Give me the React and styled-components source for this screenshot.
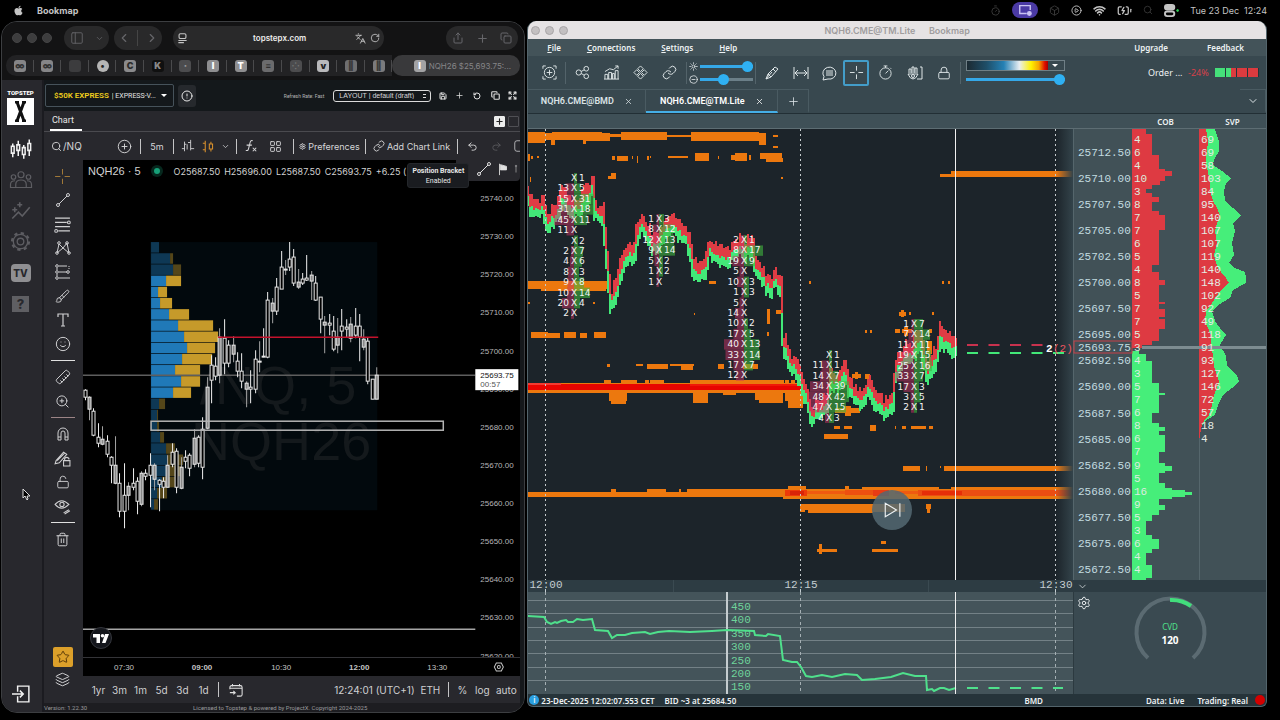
import { useState } from "react"
import styled, { createGlobalStyle, css } from "styled-components"
import { FaApple } from "react-icons/fa"
import {
  PanelLeft, ChevronDown, ChevronLeft, ChevronRight, Languages, RotateCw, RotateCcw, Share, Plus, Copy, Save,
  CircleAlert, Search, CirclePlus, LayoutGrid, Settings, Link, Undo2, Redo2, Ruler, ZoomIn,
  LockOpen, Lock, Trash2, Star, Layers, Smile, Brush, X, Wifi, BatteryCharging, CirclePlay,
  Timer, Expand, Box, Sun, CircleMinus
} from "lucide-react"

const GlobalStyle = createGlobalStyle`
  * {
    box-sizing: border-box;
  }
  body {
    margin: 0;
    background: #000;
    font-family: Inter, "Liberation Sans", sans-serif;
    overflow: hidden;
  }
  button, input, select {
    font-family: inherit;
    color: inherit;
    margin: 0;
    padding: 0;
    border: none;
    background: none;
    outline: none;
  }
  button {
    cursor: pointer;
  }
`
const Desktop = styled.div`
  height: 100vh;
  display: flex;
  flex-direction: column;
  background: #000;
`
const MenuBar = styled.header`
  height: 20px;
  flex: none;
  display: flex;
  align-items: center;
  padding: 0 13px;
  color: #c4c4c4;
  font-size: 10px;
  gap: 13px;
`
const AppName = styled.strong`
  font-size: 9px;
  font-weight: 700;
`
const Tray = styled.div`
  margin-left: auto;
  display: flex;
  align-items: center;
  gap: 11px;
`
const TrayDim = styled.span`
  display: flex;
  color: #3a3a3a;
`
const ScreenPill = styled.span`
  width: 26px;
  height: 16px;
  border-radius: 8px;
  background: #4b3aa5;
  color: #c9c2f2;
  display: flex;
  align-items: center;
  justify-content: center;
`
const Clock = styled.time`
  white-space: pre;
  font-size: 9px;
`
const Windows = styled.main`
  flex: 1;
  min-height: 0;
  display: flex;
  gap: 2px;
  padding: 1px 13px 7px 1px;
`
const Spacer = styled.div`
  flex: 1;
`

/* browser window */
const Browser = styled.section`
  flex: 524 1 0;
  min-width: 0;
  display: flex;
  flex-direction: column;
  border: 1px solid #3c3e41;
  border-radius: 16px;
  background: #17171a;
  overflow: hidden;
  color: #d6d6d8;
`
const SafariBar = styled.div`
  height: 32px;
  flex: none;
  display: flex;
  align-items: center;
  background: #131314;
  padding: 0 6px 0 10px;
`
const Lights = styled.div`
  display: flex;
  gap: ${props => props.$gap}px;
`
const Light = styled.span`
  width: ${props => props.$size}px;
  height: ${props => props.$size}px;
  border-radius: 50%;
  background: ${props => props.$color};
  border: 1px solid ${props => props.$edge};
`
const Pill = styled.div`
  width: ${props => props.$w}px;
  height: 24px;
  border-radius: 12px;
  background: #29292a;
  color: #66666a;
  display: flex;
  align-items: center;
  justify-content: space-around;
  margin-left: ${props => props.$ml}px;
`
const PlainButton = styled.button`
  display: flex;
  align-items: center;
  justify-content: center;
`
const PillRule = styled.span`
  width: 1px;
  height: 16px;
  background: #454545;
`
const UrlBox = styled.label`
  flex: 1;
  margin: 0 62px 0 11px;
  height: 24px;
  border-radius: 12px;
  background: #29292a;
  display: flex;
  align-items: center;
  gap: 4px;
  padding: 0 4px;
  color: #c5c5c5;
`
const UrlInput = styled.input`
  flex: 1;
  min-width: 0;
  padding-left: 16px;
  text-align: center;
  font-size: 8px;
  font-weight: 600;
  color: #ededed;
`
const Bookmarks = styled.div`
  height: 26px;
  flex: none;
  background: #131314;
  display: flex;
  padding: 1px 4px 4px 4px;
`
const BookmarkRow = styled.div`
  flex: 1;
  display: flex;
  border-radius: 10px 0 0 10px;
  background: #222224;
`
const Bookmark = styled.button`
  flex: 1;
  display: flex;
  align-items: center;
  justify-content: center;
  background-image: linear-gradient(#4a4a4c, #4a4a4c);
  background-size: 1px 12px;
  background-position: right center;
  background-repeat: no-repeat;
`
const Favicon = styled.span`
  width: 12px;
  height: 12px;
  border-radius: ${props => props.$round ? "50%" : "3px"};
  background: ${props => props.$bg};
  color: ${props => props.$fg};
  font-size: 9px;
  font-weight: 900;
  line-height: 12px;
  text-align: center;
`
const ActiveTab = styled.button`
  width: 128px;
  padding-left: 12px;
  border-radius: 10px;
  background: #39393b;
  color: #858588;
  font-size: 8px;
  display: flex;
  align-items: center;
  justify-content: center;
  gap: 3px;
  white-space: nowrap;
`
const Trading = styled.div`
  flex: 1;
  min-height: 0;
  display: flex;
  background: #28282d;
  border-right: 4px solid #15181b;
`
const Rail = styled.nav`
  width: 42px;
  flex: none;
  border-right: 2px solid #1b1b20;
  display: flex;
  flex-direction: column;
  align-items: center;
  padding: 8px 3px 3px 0;
  color: #5d5d62;
`
const Brand = styled.div`
  font-family: Roboto, sans-serif;
  font-size: 6px;
  font-weight: 900;
  line-height: 9px;
  color: #fff;
`
const BrandMark = styled.div`
  width: 27px;
  height: 27px;
  margin: 1px 0 8px;
  background: #fff;
  color: #111;
  display: flex;
  align-items: center;
  justify-content: center;
`
const RailButton = styled.button`
  height: 31px;
  width: 30px;
  flex: none;
  display: flex;
  align-items: center;
  justify-content: center;
  color: ${props => props.$on ? "#f2f2f2" : "inherit"};
`
const TvBadge = styled.span`
  width: 20px;
  height: 18px;
  border-radius: 4px;
  background: #8f8f92;
  color: #28282d;
  font-size: 10px;
  font-weight: 800;
  line-height: 18px;
`
const HelpBadge = styled.span`
  width: 17px;
  height: 16px;
  background: #5f5f63;
  color: #28282d;
  font-size: 13px;
  font-weight: 800;
  line-height: 16px;
`
const Workspace = styled.div`
  flex: 1;
  min-width: 0;
  display: flex;
  flex-direction: column;
`
const AccountBar = styled.div`
  height: 31px;
  flex: none;
  background: #14181b;
  display: flex;
  align-items: center;
  padding-left: 1px;
`
const AccountBox = styled.label`
  width: 129px;
  height: 23px;
  border: 1px solid #46525a;
  border-radius: 2px;
  display: flex;
  align-items: center;
  gap: 3px;
  padding-left: 8px;
  font-family: Roboto, sans-serif;
  font-size: 8px;
  color: #f2cf1d;
  font-weight: 600;
  white-space: nowrap;
`
const AccountSelect = styled.select`
  flex: 1;
  min-width: 0;
  appearance: none;
  color: #e4e4e4;
  font-size: 7px;
`
const Caret = styled.span`
  border: 3px solid transparent;
  border-top-color: #fff;
  border-bottom: none;
  margin-right: 6px;
`
const InfoButton = styled(PlainButton)`
  width: 18px;
  height: 22px;
  border-radius: 3px;
  margin-left: 4px;
  background: #26292d;
  color: #e8e8e8;
`
const Rate = styled.span`
  font-family: Roboto, sans-serif;
  font-size: 5px;
  color: #b5b5b5;
`
const LayoutSelect = styled.select`
  appearance: none;
  width: 98px;
  height: 12px;
  margin: 0 3px 0 9px;
  border: 1px solid #dadada;
  border-radius: 3px;
  padding: 0 4px 0 5px;
  font-family: "Liberation Sans", sans-serif;
  font-size: 7px;
  background-image: linear-gradient(#dadada, #dadada), linear-gradient(#dadada, #dadada);
  background-repeat: no-repeat;
  background-size: 3px 1px, 3px 1px;
  background-position: right 4px top 3px, right 4px bottom 3px;
`
const BarIcon = styled(PlainButton)`
  width: ${props => props.$w || 17}px;
  height: 18px;
  flex: none;
  color: ${props => props.$color || "#e0e0e0"};
`
const TabsBar = styled.div`
  height: 20px;
  flex: none;
  display: flex;
  align-items: center;
  padding: 0 1px 0 6px;
`
const ChartTab = styled.button`
  width: 32px;
  height: 20px;
  text-align: left;
  padding-left: 2px;
  border-bottom: 2px solid #fff;
  font-family: Roboto, sans-serif;
  font-size: 9px;
  color: #e6e6e6;
`
const SquareButton = styled.button`
  width: 11px;
  height: 11px;
  margin-left: 3px;
  border-radius: 1px;
  border: 1px solid ${props => props.$solid ? "#ececec" : "#4f4f54"};
  background: ${props => props.$solid ? "#ececec" : "none"};
  color: #222;
  display: flex;
  align-items: center;
  justify-content: center;
`
const ChartTools = styled.div`
  height: 29px;
  flex: none;
  border-top: 1px solid #4a4a4f;
  display: flex;
  align-items: center;
  padding-left: 7px;
  overflow: hidden;
  white-space: nowrap;
`
const SymbolField = styled.label`
  width: 61px;
  flex: none;
  display: flex;
  align-items: center;
  gap: 1px;
`
const SymbolInput = styled.input`
  width: 44px;
  font-size: 10px;
`
const Tool = styled(PlainButton)`
  width: ${props => props.$w}px;
  height: 24px;
  flex: none;
  gap: 2px;
  font-size: 9px;
  color: ${props => props.$color || "#d6d6d8"};
`
const Sep = styled.span`
  width: 1px;
  height: 15px;
  flex: none;
  margin: 0 4px;
  background: #c4c4c6;
`
const ChartArea = styled.div`
  flex: 1;
  min-height: 0;
  display: flex;
`
const DrawRail = styled.div`
  width: 39px;
  flex: none;
  display: flex;
  flex-direction: column;
  align-items: center;
  padding: 4px 2px 12px 0;
`
const DrawTool = styled(PlainButton)`
  width: 28px;
  height: 24px;
  flex: none;
  color: ${props => props.$color || "#cfcfd1"};
`
const DrawRule = styled.span`
  width: 24px;
  height: 1px;
  flex: none;
  margin: 4px 0;
  background: ${props => props.$color || "#e0e0e0"};
`
const StarTool = styled(PlainButton)`
  width: 20px;
  height: 20px;
  flex: none;
  border-radius: 2px;
  background: #dca02a;
  color: #5a3a08;
`
const ChartColumn = styled.div`
  flex: 1;
  min-width: 0;
  display: flex;
  flex-direction: column;
`
const ChartBox = styled.div`
  flex: 1;
  min-height: 0;
  position: relative;
  background: #000;
`
const Plot = styled.svg`
  display: block;
  width: 100%;
  height: 100%;
`
const Legend = styled.div`
  position: absolute;
  top: 2px;
  left: 5px;
  display: flex;
  align-items: center;
  gap: 4px;
  height: 18px;
  font-size: 9px;
  color: #d2d2d2;
  white-space: nowrap;
`
const LegendName = styled.span`
  font-family: "Liberation Sans", sans-serif;
  font-size: 11px;
`
const LiveDot = styled.span`
  width: 6px;
  height: 6px;
  border-radius: 50%;
  margin: 0 10px 0 9px;
  background: #17a078;
  box-shadow: 0 0 0 3px #06281e;
`
const FavBar = styled.div`
  position: absolute;
  top: 0;
  right: 0;
  width: 64px;
  height: 21px;
  background: #28282d;
  border-radius: 0 0 4px 0;
  display: flex;
  justify-content: flex-end;
  color: #c9c9cb;
`
const Tip = styled.div`
  position: absolute;
  top: 3px;
  right: 51px;
  width: 62px;
  height: 25px;
  background: #1a1c20;
  border: 1px solid #24272b;
  border-radius: 3px;
  font-family: Roboto, sans-serif;
  font-size: 7px;
  line-height: 10px;
  padding-top: 2px;
  text-align: center;
  color: #e6e6e6;
`
const TvLogo = styled.a`
  position: absolute;
  left: 7px;
  bottom: 8px;
  width: 22px;
  height: 22px;
  border-radius: 50%;
  border: 1px solid #34363c;
  background: #14161c;
  display: flex;
  align-items: center;
  justify-content: center;
`
const TimeAxis = styled.div`
  height: 19px;
  flex: none;
  border-top: 1px solid #343438;
  background: #000;
`
const RangeBar = styled.div`
  height: 27px;
  flex: none;
  background: #28282d;
  display: flex;
  align-items: center;
  padding: 0 1px 0 5px;
`
const RangeButton = styled.button`
  width: ${props => props.$w || 21}px;
  font-size: 10px;
  white-space: nowrap;
  color: #cfcfd1;
`
const Footer = styled.footer`
  height: 9px;
  flex: none;
  background: #1d1d21;
  display: flex;
  align-items: center;
  justify-content: space-between;
  padding-right: 153px;
  font-family: Roboto, sans-serif;
  font-size: 6px;
  color: #9a9a9c;
`

/* bookmap window */
const Bookmap = styled.section`
  flex: 740 1 0;
  min-width: 0;
  margin-bottom: 6px;
  display: flex;
  flex-direction: column;
  border: 1px solid #53646b;
  border-top: none;
  border-radius: 9px 9px 6px 6px;
  background: #38484f;
  overflow: hidden;
  color: #eef2f3;
  font-family: "Noto Sans", "Open Sans", sans-serif;
  font-size: 9px;
`
const TitleBar = styled.div`
  height: 18px;
  flex: none;
  background: #e6e3e4;
  display: grid;
  grid-template-columns: 38px 1fr 38px;
  align-items: center;
  padding: 0 3px;
`
const WindowTitle = styled.h1`
  margin: 0;
  font-family: Inter, sans-serif;
  font-size: 9px;
  font-weight: 600;
  text-align: center;
  white-space: pre;
  color: #a09d9e;
`
const MenuRow = styled.div`
  height: 17px;
  flex: none;
  background: #435359;
  display: flex;
  align-items: center;
  gap: 26px;
  padding: 0 22px 0 19px;
`
const MenuItem = styled.button`
  font-size: 8px;
  font-weight: 600;
  margin-left: ${props => props.$ml || 0}px;
  &::first-letter {
    text-decoration: ${props => props.$plain ? "none" : "underline"};
  }
`
const ToolRow = styled.div`
  height: 33px;
  flex: none;
  display: flex;
  align-items: center;
  padding: 0 7px;
`
const BmTool = styled(PlainButton)`
  width: ${props => props.$w || 29}px;
  height: 26px;
  flex: none;
  color: #dfe6e8;
  ${props => props.$on && css`
    width: 26px;
    margin: 0 2px 0 0;
    border: 2px solid #439dc9;
    border-radius: 2px;
  `}
`
const BmSep = styled.span`
  width: 1px;
  height: 22px;
  flex: none;
  margin: 0 2px;
  background: #53636a;
`
const SliderStack = styled.div`
  display: grid;
  grid-template-columns: 11px 53px;
  row-gap: 2px;
  align-items: center;
`
const Range = styled.input`
  appearance: none;
  display: block;
  width: 100%;
  height: 11px;
  &::-webkit-slider-runnable-track {
    height: 3px;
    background: linear-gradient(to right, #35a8e8 ${props => props.value}%, #6b7f88 ${props => props.value}%);
  }
  &::-webkit-slider-thumb {
    appearance: none;
    width: 11px;
    height: 11px;
    margin-top: -4px;
    border-radius: 50%;
    background: #2fb0f2;
  }
`
const Palette = styled.div`
  width: 99px;
  margin-left: 3px;
  display: flex;
  flex-direction: column;
  gap: 3px;
`
const PaletteButton = styled.button`
  height: 11px;
  border: 1px solid #6f7f86;
  background: linear-gradient(to right, #1c2a32 0, #1e4e68 20%, #2581b5 38%, #e8eef2 54%, #fff200 66%, #f5a500 74%, #e01000 80%, #b00000 83%, #38484f 83%);
  display: flex;
  align-items: center;
  justify-content: flex-end;
`
const OrderText = styled.span`
  width: 40px;
  white-space: nowrap;
`
const OrderPct = styled.span`
  width: 27px;
  color: #d8404a;
`
const OrderCell = styled.span`
  width: 11px;
  height: 9px;
  border-right: 1px solid #25343a;
  background: linear-gradient(to right, #45e07a ${props => props.$fill}%, #dc3b3f ${props => props.$fill}%);
`
const TabRow = styled.div`
  height: 25px;
  flex: none;
  display: flex;
  border-bottom: 1px solid #222f35;
`
const BmTab = styled.button`
  width: ${props => props.$w}px;
  border: 1px solid #4a5b62;
  border-left: none;
  border-bottom: 2px solid ${props => props.$on ? "#45aee6" : "#38484f"};
  display: flex;
  align-items: center;
  justify-content: center;
  gap: 10px;
  padding-top: 1px;
  font-family: Roboto, sans-serif;
  font-size: 9px;
  font-weight: 600;
  color: ${props => props.$on ? "#fff" : "#dbe3e6"};
`
const ColumnHeads = styled.div`
  height: 15px;
  flex: none;
  display: grid;
  grid-template-columns: 1fr 67px 67px;
  align-items: center;
  text-align: center;
  font-size: 8px;
  font-weight: 600;
  background: #3f5057;
  border-bottom: 1px solid #5d6d73;
`
const Body = styled.div`
  flex: 1;
  min-height: 0;
  display: grid;
  grid-template-columns: minmax(0, 1fr) 193px;
  grid-template-rows: minmax(0, 1fr) 12px 102px;
`
const Pane = styled.div`
  position: relative;
  min-width: 0;
  min-height: 0;
  background: ${props => props.$bg};
`
const Replay = styled.button`
  position: absolute;
  right: 161px;
  bottom: 50px;
  width: 40px;
  height: 40px;
  border-radius: 50%;
  background: rgba(84, 104, 114, 0.85);
  display: flex;
  align-items: center;
  justify-content: center;
`
const PaneToggle = styled(PlainButton)`
  height: 12px;
  width: 18px;
`
const GaugePane = styled(Pane)`
  border-left: 1px solid #2c3a40;
`
const GaugeGear = styled(PlainButton)`
  position: absolute;
  top: 3px;
  left: 2px;
  width: 16px;
  height: 16px;
`
const StatusBar = styled.div`
  height: 12px;
  flex: none;
  background: #26343a;
  display: flex;
  align-items: center;
  padding: 0 1px;
  font-size: 8px;
  font-weight: 600;
  white-space: nowrap;
`
const StatusDot = styled.span`
  width: 10px;
  height: 10px;
  border-radius: 50%;
  background: ${props => props.$color};
  font-size: 8px;
  line-height: 10px;
  text-align: center;
`
const StatusText = styled.span`
  margin-left: ${props => props.$ml}px;
`
const Pointer = styled.svg`
  position: fixed;
  left: 22px;
  top: 488px;
`

/* x, high, low, body top, body bottom */
const CANDLES = [
  [86, 389, 400, 390, 397], [90, 396, 420, 397, 409], [94, 408, 436, 411, 435], [99, 423, 447, 437, 443],
  [103, 426, 445, 439, 444], [108, 435, 457, 441, 454], [112, 456, 483, 457, 465], [116, 436, 484, 465, 483],
  [120, 473, 517, 483, 511], [125, 463, 528, 495, 511], [129, 482, 510, 486, 495], [134, 468, 490, 483, 487],
  [138, 477, 514, 481, 501], [142, 471, 506, 473, 504], [146, 469, 480, 473, 476], [151, 453, 507, 465, 475],
  [155, 463, 490, 465, 479], [160, 479, 511, 480, 484], [164, 477, 498, 481, 487], [168, 455, 487, 465, 487],
  [173, 443, 467, 452, 464], [177, 448, 493, 451, 487], [182, 457, 489, 467, 488], [186, 450, 468, 457, 461],
  [190, 453, 476, 455, 468], [195, 429, 467, 438, 464], [199, 435, 467, 437, 463], [203, 417, 479, 429, 467],
  [208, 377, 429, 387, 428], [212, 355, 403, 365, 380], [216, 357, 380, 366, 376], [220, 328, 383, 337, 375],
  [225, 319, 374, 338, 363], [229, 340, 367, 345, 363], [234, 336, 362, 345, 354], [238, 352, 377, 361, 371],
  [242, 353, 388, 371, 381], [247, 381, 407, 383, 389], [251, 370, 403, 387, 389], [256, 350, 393, 359, 389],
  [260, 341, 372, 361, 362], [264, 328, 357, 356, 357], [268, 292, 358, 300, 357], [273, 298, 323, 303, 311],
  [277, 278, 315, 287, 311], [282, 251, 289, 267, 289], [286, 260, 275, 269, 270], [290, 242, 271, 259, 267],
  [294, 249, 286, 257, 283], [299, 269, 289, 282, 287], [303, 273, 285, 279, 283], [307, 255, 281, 278, 280],
  [312, 271, 300, 275, 281], [316, 276, 301, 283, 300], [321, 297, 333, 297, 319], [325, 316, 353, 322, 325],
  [330, 314, 335, 323, 325], [334, 316, 351, 331, 349], [338, 318, 353, 337, 345], [342, 309, 350, 326, 331],
  [347, 319, 337, 327, 329], [351, 317, 342, 324, 338], [356, 308, 338, 326, 335], [360, 314, 361, 326, 337],
  [364, 329, 350, 339, 347], [368, 337, 384, 341, 381], [373, 379, 399, 379, 399], [377, 367, 399, 375, 399]
]
/* buy end, sell end, inside value area */
const PROFILE = [
  [159, 159, 0], [170, 173, 0], [173, 181, 0], [166, 181, 1], [158, 167, 1], [160, 172, 1], [169, 189, 1],
  [178, 213, 1], [184, 218, 1], [187, 215, 1], [182, 212, 1], [175, 200, 1], [181, 200, 1], [173, 191, 1],
  [159, 165, 0], [157, 158, 0], [157, 159, 0], [160, 164, 0], [166, 175, 0], [167, 183, 0], [167, 182, 0],
  [162, 175, 0], [157, 167, 0], [154, 158, 0]
]
const PRICES = ["25740.00", "25730.00", "25720.00", "25710.00", "25700.00", "25690.00", "25680.00", "25670.00",
  "25660.00", "25650.00", "25640.00", "25630.00", "25620.00"]

/* resting liquidity blocks: x, y, width, height */
const BLOCKS = [
  [528, 132, 17, 11], [545, 133, 65, 7], [552, 132, 50, 7], [551, 139, 4, 6], [583, 139, 3, 5], [586, 134, 24, 7],
  [610, 134, 12, 3], [621, 132, 46, 8], [667, 135, 25, 2], [691, 132, 68, 9], [759, 133, 7, 12], [773, 135, 5, 2],
  [773, 146, 5, 2], [528, 154, 2, 7], [531, 156, 2, 3], [537, 156, 2, 2], [612, 156, 3, 4], [617, 156, 11, 5],
  [632, 156, 1, 3], [637, 156, 1, 7], [647, 156, 2, 4], [650, 156, 1, 2], [668, 156, 20, 2], [695, 153, 14, 8],
  [718, 156, 1, 3], [731, 155, 16, 5], [735, 153, 12, 8], [749, 155, 2, 5], [760, 153, 22, 6], [766, 158, 17, 4],
  [530, 177, 1, 5], [608, 176, 8, 3], [611, 173, 5, 6], [781, 177, 2, 2], [528, 281, 81, 8], [541, 284, 65, 7],
  [528, 302, 2, 2], [593, 302, 2, 2], [709, 281, 7, 3], [694, 313, 1, 2], [767, 309, 3, 15], [776, 310, 5, 4],
  [767, 332, 2, 4], [531, 332, 17, 6], [548, 333, 12, 5], [564, 332, 12, 6], [580, 333, 7, 5], [594, 332, 12, 6],
  [607, 364, 3, 3], [636, 364, 7, 2], [647, 364, 21, 5], [670, 364, 24, 2], [681, 366, 12, 4], [718, 364, 6, 5],
  [743, 364, 15, 5], [604, 380, 7, 3], [621, 380, 16, 3], [645, 380, 4, 3], [650, 380, 14, 3], [690, 380, 94, 3],
  [785, 380, 4, 3], [791, 380, 4, 3], [797, 380, 6, 3], [528, 383, 277, 10], [609, 392, 18, 9], [611, 400, 15, 4],
  [693, 392, 15, 11], [723, 392, 13, 3], [755, 392, 28, 8], [759, 400, 24, 3], [785, 392, 18, 9], [788, 401, 15, 7],
  [528, 492, 257, 5], [611, 489, 5, 3], [647, 489, 19, 3], [679, 489, 2, 3], [687, 489, 98, 3], [783, 489, 290, 10],
  [788, 486, 18, 4], [845, 486, 4, 4], [862, 487, 77, 4], [951, 487, 122, 4], [803, 504, 70, 6], [800, 504, 5, 8],
  [808, 509, 65, 4], [873, 504, 32, 8], [926, 504, 5, 5], [927, 508, 3, 5], [817, 549, 20, 3], [819, 544, 3, 10],
  [872, 549, 26, 3], [881, 541, 5, 3], [903, 466, 17, 5], [926, 466, 1, 5], [940, 466, 1, 2], [944, 466, 129, 5],
  [951, 171, 122, 6], [940, 174, 11, 3], [809, 281, 2, 3], [942, 281, 2, 3], [948, 281, 2, 3], [899, 312, 7, 4],
  [901, 310, 3, 7], [909, 312, 2, 3], [932, 312, 2, 3], [895, 329, 5, 4], [902, 329, 10, 4], [904, 327, 4, 9],
  [929, 329, 3, 4], [865, 330, 2, 3], [870, 330, 2, 3], [927, 341, 5, 13], [852, 374, 9, 4], [855, 372, 3, 7],
  [865, 374, 5, 5], [835, 408, 25, 5], [845, 406, 6, 10], [834, 426, 6, 3], [844, 426, 8, 3], [870, 425, 6, 6],
  [895, 426, 1, 3], [902, 426, 4, 3], [911, 426, 15, 3], [929, 426, 4, 3], [824, 434, 24, 5]
]
const HOT = [
  [528, 384, 275, 6, "#e80400"], [528, 383, 33, 2, "#f43a30"], [690, 384, 112, 2, "#f01808"],
  [785, 490, 22, 6, "#ee3a08"], [790, 491, 14, 4, "#d92408"], [807, 491, 38, 3, "#f05a10"],
  [845, 490, 30, 5, "#ee5010"], [873, 490, 16, 6, "#e83c14"], [895, 491, 24, 3, "#f05a10"], [918, 490, 155, 6, "#ec4d12"],
  [922, 491, 40, 4, "#e62e08"]
]
const PATH = [
  [527, 196], [532, 210], [543, 208], [548, 223], [558, 210], [562, 195], [572, 208], [580, 210], [587, 196],
  [593, 185], [595, 213], [603, 213], [607, 258], [610, 295], [612, 304], [617, 288], [622, 268], [628, 256],
  [635, 253], [638, 228], [643, 226], [648, 238], [653, 245], [657, 248], [665, 231], [672, 227], [678, 230],
  [685, 238], [690, 245], [693, 270], [698, 276], [705, 268], [709, 251], [718, 253], [725, 261], [732, 256],
  [738, 245], [745, 251], [752, 246], [755, 268], [762, 273], [767, 285], [772, 286], [777, 281], [782, 291],
  [783, 341], [790, 362], [797, 370], [802, 382], [807, 398], [812, 416], [820, 408], [827, 403], [830, 385],
  [838, 380], [845, 373], [850, 388], [855, 398], [863, 398], [871, 385], [875, 400], [885, 409], [893, 401],
  [895, 378], [900, 361], [907, 355], [913, 355], [917, 341], [922, 345], [927, 375], [932, 366], [938, 351],
  [941, 331], [945, 341], [950, 346], [956, 345]
]
const FOOTPRINTS = [
  { x: 574, y: 178, rows: [["", 1], [13, 5], [15, 31], [31, 18], [45, 11], [11, ""], ["", 2], [2, 7], [4, 6], [8, 3], [9, 8], [10, 14], [20, 4], [2, ""]] },
  { x: 659, y: 219, rows: [[1, 3], [8, 12], [12, 13], [9, 14], [5, 2], [1, 2], [1, ""]] },
  { x: 744, y: 240, rows: [[2, 1], [8, 17], [19, 9], [5, ""], [10, 3], [1, 3], [5, ""], [14, ""], [10, 2], [17, 5], [40, 13], [33, 14], [17, 7], [12, ""]] },
  { x: 829, y: 355, rows: [["", 1], [11, 1], [14, 7], [34, 39], [48, 42], [47, 15], [4, 3]] },
  { x: 914, y: 324, rows: [[1, 7], [7, 14], [11, 11], [19, 15], [25, 16], [33, 7], [17, 3], [3, 5], [2, 1]] }
]
const COB = [4, 6, 4, 10, 3, 8, 7, 7, 6, 5, 4, 8, 5, 7, 7, 5, 3, 4, 3, 5, 7, 6, 8, 6, 7, 9, 5, 16, 9, 5, 3, 6, 4, 4]
const SVP = [69, 69, 58, 103, 84, 95, 140, 107, 107, 119, 140, 148, 102, 92, 49, 118, 91, 93, 127, 146, 72, 57, 18, 4]
const LADDER = ["25712.50", "25710.00", "25707.50", "25705.00", "25702.50", "25700.00", "25697.50", "25695.00",
  "25692.50", "25690.00", "25687.50", "25685.00", "25682.50", "25680.00", "25677.50", "25675.00", "25672.50"]
/* y where each step starts and its right edge */
const ASKS = [
  [129, 1146], [134, 1152], [155, 1159], [169, 1165], [171, 1172], [176, 1165], [181, 1160], [185, 1152],
  [189, 1146], [193, 1152], [197, 1159], [202, 1152], [211, 1159], [215, 1165], [230, 1159], [265, 1152],
  [272, 1159], [280, 1165], [285, 1159], [302, 1165], [304, 1159], [309, 1165], [317, 1159], [319, 1165],
  [329, 1159], [341, 1152], [345, 1142], [348, 1132]
]
const BIDS = [
  [351, 1139], [354, 1146], [361, 1152], [383, 1159], [393, 1165], [395, 1159], [413, 1152], [423, 1159],
  [427, 1165], [431, 1159], [435, 1165], [452, 1159], [463, 1165], [466, 1172], [471, 1165], [473, 1159],
  [483, 1165], [488, 1172], [490, 1185], [492, 1192], [495, 1185], [497, 1172], [499, 1159], [505, 1165],
  [510, 1159], [515, 1152], [521, 1146], [535, 1152], [539, 1159], [549, 1152], [553, 1146], [565, 1152],
  [578, 1146], [580, 1132]
]
/* y, sell edge, total edge */
const VOLUME = [
  [129, 1206, 1215], [141, 1208, 1219], [151, 1207, 1219], [160, 1206, 1214], [165, 1206, 1213], [171, 1208, 1222],
  [178, 1209, 1231], [183, 1210, 1226], [191, 1210, 1224], [201, 1213, 1225], [208, 1217, 1233], [215, 1220, 1241],
  [223, 1217, 1233], [231, 1215, 1235], [243, 1217, 1232], [255, 1214, 1234], [263, 1216, 1229], [268, 1218, 1235],
  [272, 1221, 1245], [278, 1226, 1246], [283, 1229, 1246], [290, 1221, 1233], [298, 1215, 1230], [305, 1211, 1218],
  [311, 1206, 1212], [321, 1205, 1215], [328, 1208, 1220], [335, 1211, 1226], [345, 1211, 1220], [356, 1213, 1226],
  [366, 1214, 1227], [375, 1217, 1237], [381, 1219, 1239], [388, 1217, 1232], [395, 1214, 1223], [405, 1212, 1218],
  [415, 1209, 1215], [421, 1204, 1205], [428, 1201, 1201], [436, 1200, 1200]
]
const CVD = "527,616 544,617 547,622 551,624 555,622 557,623 561,621 566,620 568,622 573,622 577,619 583,620 592,619 595,630 608,631 612,638 617,635 625,635 632,633 645,632 650,634 658,632 669,631 690,632 712,631 727,630 754,631 755,635 766,636 768,634 780,636 783,660 792,662 797,662 801,667 806,676 812,677 822,675 832,677 845,674 857,675 862,680 875,679 891,677 903,673 915,676 926,676 927,690 932,689 934,691 940,688 944,688 949,690 956,688"

const interpolate = x => {
  let i = 0
  while (i < PATH.length - 2 && PATH[i + 1][0] < x) i++
  const [x0, y0] = PATH[i]
  const [x1, y1] = PATH[i + 1]
  return y0 + (y1 - y0) * Math.min(1, (x - x0) / (x1 - x0))
}
const noise = n => {
  const s = Math.sin(n * 12.9898) * 43758.5453
  return s - Math.floor(s)
}
const BOOK = Array.from({ length: 215 }, (_, i) => {
  const x = 527 + i * 2
  const a = interpolate(x)
  const b = interpolate(x + 2)
  const j = Math.round((noise(i) - 0.5) * 7)
  const up = Math.min(a, b) + j - 6 - Math.round(noise(i + 400) * 7)
  const down = Math.max(a, b) + j + 6 + Math.round(noise(i + 900) * 5)
  return { x, up: Math.round(up), mid: Math.round((a + b) / 2 + j), down: Math.round(down) }
})

/* small line drawings, 16 units square */
const Draw = ({ size = 16, children, w = 1 }) => (
  <svg width={size} height={size} viewBox="0 0 16 16" fill="none" stroke="currentColor" strokeWidth={w}>
    {children}
  </svg>
)
const TrendLine = () => <Draw><path d="M4 12 12 4" /><circle cx="3" cy="13" r="1.5" /><circle cx="13" cy="3" r="1.5" /></Draw>
const FibLines = () => <Draw size={17}><path d="M1 2H15M1 6H12M1 10H15M4 14H15" /><circle cx="14" cy="6" r="1.3" /><circle cx="2" cy="14" r="1.3" /></Draw>
const Pattern = () => <Draw><path d="M2 13 4 4 8 8 12 3 14 13 8 8 2 13" /><circle cx="2" cy="13" r="1.3" /><circle cx="4" cy="3" r="1.3" /><circle cx="12" cy="3" r="1.3" /><circle cx="14" cy="13" r="1.3" /></Draw>
const Forecast = () => <Draw><path d="M4 2H12M4 8H12M4 14H15M2 4V6M2 10V12" /><path d="M14 2V6" strokeDasharray="1 1" /><circle cx="2" cy="2" r="1.3" /><circle cx="2" cy="8" r="1.3" /><circle cx="2" cy="14" r="1.3" /><circle cx="13" cy="8" r="1.3" /></Draw>
const PenLock = () => <Draw size={17}><path d="M1 13 2 10 9 2 12 4 5 12ZM3 10 10 3" /><path d="M9 10H15V15H9ZM10 10V8Q12 6 14 8V9" fill="#28282d" /></Draw>
const EyeLock = () => <Draw size={17}><path d="M1 6Q7-1 14 6 7 13 1 6Z" /><circle cx="7.500" cy="6" r="2" /><path d="M9 14 14 11M10 15 15 12" /></Draw>
const TextTool = () => <Draw w={1.2}><path d="M3 5V2H13V5M8 2V14M6 14H10" /></Draw>
const People = () => (
  <Draw size={24} w={0.8}>
    <circle cx="8" cy="4.500" r="2" /><circle cx="3" cy="6" r="1.500" /><circle cx="13" cy="6" r="1.500" />
    <path d="M4.500 13V11Q4.500 8 8 8T11.500 11V13ZM4.500 13H1V11Q1 8.500 4 8.500M11.500 13H15V11Q15 8.500 12 8.500" />
  </Draw>
)
const Cog = () => (
  <Draw size={21}>
    <circle cx="8" cy="8" r="5.500" /><circle cx="8" cy="8" r="2.500" />
    <circle cx="8" cy="8" r="6.500" strokeWidth="1.600" strokeDasharray="2.500 2.600" />
  </Draw>
)
const CrossIcon = ({ size = 17 }) => <Draw size={size}><path d="M8 1V6M8 10V15M1 8H6M10 8H15" /></Draw>
const CandleIcon = ({ size = 20 }) => (
  <Draw size={size} w={1.1}>
    <path d="M2 4V6M2 11V14M6 2V5M6 9V13M10 5V7M10 12V15M14 1V4M14 9V13" />
    <path d="M1 6H3V11H1ZM5 5H7V9H5ZM9 7H11V12H9ZM13 4H15V9H13Z" />
  </Draw>
)

const Footprint = ({ x, y, rows }) => (
  <g>
    {rows.map(([bid, ask], i) => {
      const cy = y + i * 10.42
      return (
        <g key={i}>
          {bid !== "" && <rect x={x - Math.min(20, 2 + bid / 2)} y={cy - 5} width={Math.min(20, 2 + bid / 2)} height="10.4" fill="#c83264" opacity="0.5" />}
          {ask !== "" && <rect x={x} y={cy - 5} width={Math.min(20, 2 + ask)} height="10.4" fill="#3fb43f" opacity="0.6" />}
          <text x={x - 5} y={cy + 3} textAnchor="end">{bid}</text>
          <text x={x} y={cy + 3} textAnchor="middle">X</text>
          <text x={x + 5} y={cy + 3}>{ask}</text>
        </g>
      )
    })}
  </g>
)

const PriceChart = () => (
  <Plot viewBox="83 160 437 497" preserveAspectRatio="xMinYMin slice" fontFamily="Liberation Sans, sans-serif">
    <rect x="150" y="242" width="227" height="268" fill="#02090d" />
    <g fill="#14191c" fontSize="54" textAnchor="middle">
      <text x="278" y="404">/NQ, 5</text>
      <text x="281" y="460">NQH26</text>
    </g>
    {PROFILE.map(([buy, sell, inside], i) => (
      <g key={i} opacity={inside ? 1 : 0.42}>
        <rect x="151" y={242 + i * 11.17} width={buy - 151} height="10.5" fill="#2079b8" />
        <rect x={buy} y={242 + i * 11.17} width={sell - buy} height="10.5" fill="#c69a2a" />
      </g>
    ))}
    <path d="M83 375H475" stroke="#5e5e5e" strokeWidth="1.5" />
    {CANDLES.map(([x, high, low, top, bottom], i) => (
      <g key={x} stroke="#e8e8e8">
        <path d={`M${x - 1}.5 ${high}V${low}`} stroke={i % 3 === 1 ? "#a4a4a4" : "#f0f0f0"} />
        <rect x={x - 2} y={top} width="3" height={Math.max(1, bottom - top)} fill={i % 3 === 1 ? "#888" : "#000"} />
      </g>
    ))}
    <path d="M218 337H378" stroke="#c4122c" strokeWidth="1.5" />
    <rect x="151" y="421" width="292" height="9" fill="none" stroke="#b4b4b4" strokeWidth="1.5" />
    <path d="M83 629H475" stroke="#a6a6a6" strokeWidth="1.5" />
    <g fill="#b6b6b8" fontSize="8">
      {PRICES.map((p, i) => <text key={p} x="480" y={201 + i * 38.1}>{p}</text>)}
    </g>
    <rect x="475" y="369" width="43" height="21" fill="#fff" />
    <g fontSize="8">
      <text x="480" y="378" fill="#111">25693.75</text>
      <text x="480" y="387" fill="#555">00:57</text>
    </g>
  </Plot>
)

const Heatmap = () => (
  <Plot viewBox="528 129 545 451" preserveAspectRatio="xMinYMin slice">
    <defs>
      <linearGradient id="edge"><stop offset="0" stopColor="#33434a" stopOpacity="0" /><stop offset="1" stopColor="#33434a" /></linearGradient>
    </defs>
    <g shapeRendering="crispEdges">
      {BLOCKS.map(([x, y, w, h], i) => <rect key={i} x={x} y={y} width={w} height={h} fill="#ec780e" />)}
      {HOT.map(([x, y, w, h, c], i) => <rect key={i} x={x} y={y} width={w} height={h} fill={c} />)}
      {BOOK.map(({ x, up, mid, down }) => (
        <g key={x}>
          <rect x={x} y={up} width="2" height={Math.max(4, mid - up)} fill="#df3c44" />
          <rect x={x} y={mid} width="2" height={Math.max(4, down - mid)} fill="#42e878" />
        </g>
      ))}
    </g>
    <g stroke="#c6ccce" strokeDasharray="2 3">
      <path d="M545.5 129V580M800.5 129V580M1055.5 129V580" />
    </g>
    <g fill="#f4f4f4" fontSize="9" fontFamily="DejaVu Sans, sans-serif">
      {FOOTPRINTS.map(f => <Footprint key={f.x} {...f} />)}
    </g>
    <rect x="1056" y="129" width="17" height="451" fill="url(#edge)" />
    <g strokeWidth="2" strokeDasharray="11 10.5">
      <path d="M967 345H1043" stroke="#c8324e" />
      <path d="M967 353H1043M1053 353H1065" stroke="#42e878" />
    </g>
    <path d="M955.5 129V580" stroke="#f0f0f0" />
    <g fontSize="11" fontFamily="Liberation Mono, monospace">
      <text x="1046" y="352" fill="#fff" fontWeight="700">2</text>
      <text x="1053" y="352" fill="#ee5560">(2)</text>
    </g>
  </Plot>
)

const steps = (list, fill) => list.slice(0, -1).map(([y, right], i) => (
  <rect key={y} x="1132" y={y} width={right - 1132} height={list[i + 1][0] - y} fill={fill} />
))

const Ladder = () => {
  const sells = VOLUME.map(([y, a]) => `${a},${y}`).join(" ")
  const totals = VOLUME.map(([y, , b]) => `${b},${y}`).join(" ")
  return (
    <Plot viewBox="1073 129 193 451" preserveAspectRatio="xMinYMin slice">
      <path d="M1073.5 129V580M1199.5 129V580" stroke="#55666c" />
      <g shapeRendering="crispEdges">
        {steps(ASKS, "#de3a42")}
        {steps(BIDS, "#46ee7a")}
        <polygon points={`1199,129 ${totals} 1199,440`} fill="#46ee7a" />
        <polygon points={`1199,129 ${sells} 1199,440`} fill="#de3a42" />
      </g>
      <rect x="1142" y="346" width="124" height="3" fill="#7d8c91" />
      <rect x="1074" y="341" width="58" height="12" fill="none" stroke="#c84048" />
      <g fontSize="11" fontFamily="Liberation Mono, monospace" fill="#c3dce0">
        {LADDER.map((p, i) => <text key={p} x="1078" y={156 + i * 26.05}>{p}</text>)}
        <text x="1078" y="351">25693.75</text>
        {COB.map((n, i) => <text key={i} x="1134" y={143 + i * 13.02} fill="#dcecdf">{n}</text>)}
        {SVP.map((n, i) => <text key={i} x="1201" y={143 + i * 13.02} fill="#e4ece4">{n}</text>)}
      </g>
    </Plot>
  )
}

const Indicator = () => (
  <Plot viewBox="528 592 545 102" preserveAspectRatio="xMinYMin slice">
    <path d="M528 600.5H1073M528 613.5H1073M528 627.5H1073M528 640.5H1073M528 653.5H1073M528 667.5H1073M528 680.5H1073" stroke="#738186" />
    <path d="M545.5 592V694M800.5 592V694M1055.5 592V694" stroke="#a4afb3" strokeDasharray="3 3" />
    <path d="M727 592V694" stroke="#c4cccf" strokeWidth="2" />
    <g fontSize="11" fontFamily="Liberation Mono, monospace" fill="#6fd39a">
      {[450, 400, 350, 300, 250, 200, 150].map((n, i) => <text key={n} x="731" y={610 + i * 13.4}>{n}</text>)}
    </g>
    <polyline points={CVD} fill="none" stroke="#4fe08c" strokeWidth="2" />
    <path d="M967 688H1063" stroke="#4fe08c" strokeWidth="2" strokeDasharray="11 10.5" />
    <path d="M955.5 592V694" stroke="#f0f0f0" />
  </Plot>
)

const FAVICONS = [
  ["#858587", "#333", "∞"], ["#858587", "#333", "∞"], ["#3c3c3e", "#222", ""], ["#b5b5b5", "#222", "•", true], ["#8a8a8c", "#2a2a2a", "C"],
  ["#101010", "#8a8a8a", "K"], ["#4c4c4e", "#9a9a9a", "·"], ["#8e8e90", "#fff", "I"], ["#8e8e90", "#fff", "T"],
  ["#6b6b6d", "#222", "≡"], ["#4c4c4e", "#777", "⁘"], ["#b9b9bb", "#222", "v"], ["#6f6f71", "#3a3a3a", "‖"], ["#7b7b7d", "#3a3a3a", "‖"]
]

const BrowserWindow = () => (
  <Browser>
    <SafariBar>
      <Lights $gap={5}>
        {[0, 1, 2].map(i => <Light key={i} $size={10} $color="#3d3d3e" $edge="#454546" />)}
      </Lights>
      <Pill $w={45} $ml={12}>
        <PlainButton aria-label="Sidebar"><PanelLeft size={14} strokeWidth={1.5} /></PlainButton>
        <PlainButton aria-label="Tab groups"><ChevronDown size={9} /></PlainButton>
      </Pill>
      <Pill $w={48} $ml={5}>
        <PlainButton aria-label="Back"><ChevronLeft size={14} /></PlainButton>
        <PillRule />
        <PlainButton aria-label="Forward"><ChevronRight size={14} /></PlainButton>
      </Pill>
      <UrlBox>
        <Draw size={11} w={1.6}><rect x="3" y="1" width="10" height="7" rx="2" /><path d="M2 11H14M2 14H10" /></Draw>
        <UrlInput aria-label="Address" defaultValue="topstepx.com" />
        <Languages size={11} />
        <RotateCw size={10} />
      </UrlBox>
      <Pill $w={72} $ml={0}>
        <PlainButton aria-label="Share"><Share size={12} /></PlainButton>
        <PlainButton aria-label="New tab"><Plus size={13} /></PlainButton>
        <PlainButton aria-label="Tabs"><Copy size={12} /></PlainButton>
      </Pill>
    </SafariBar>
    <Bookmarks>
      <BookmarkRow>
        {FAVICONS.map(([bg, fg, mark, round], i) => (
          <Bookmark key={i} aria-label={"Tab " + (i + 1)}><Favicon $bg={bg} $fg={fg} $round={round}>{mark}</Favicon></Bookmark>
        ))}
      </BookmarkRow>
      <ActiveTab><Favicon $bg="#a2a2a4" $fg="#fff">I</Favicon>NQH26 $25,693.75:...</ActiveTab>
    </Bookmarks>
    <Trading>
      <Rail>
        <Brand>TOPSTEP</Brand>
        <BrandMark>
          <svg width="11" height="21" viewBox="0 0 11 21" fill="none" stroke="#111" strokeWidth="3"><path d="M2 1 9 20M9 1 2 20M0 1H4M7 1H11M0 20H4M7 20H11" /></svg>
        </BrandMark>
        <RailButton $on aria-label="Charts"><CandleIcon size={22} /></RailButton>
        <RailButton aria-label="Leaderboard"><People /></RailButton>
        <RailButton aria-label="Analytics"><Draw size={20} w={1.3}><path d="M1 14 6 9 9 12 15 5M3 5V9M1 7H5M7 1V5M5 3H9" /></Draw></RailButton>
        <RailButton aria-label="Settings"><Cog /></RailButton>
        <RailButton aria-label="TradingView"><TvBadge>TV</TvBadge></RailButton>
        <RailButton aria-label="Help"><HelpBadge>?</HelpBadge></RailButton>
        <Spacer />
        <RailButton $on aria-label="Log out"><Draw size={18} w={1.3}><path d="M5 6V1H15V15H5V10M0 8H10M7 5 10 8 7 11" /></Draw></RailButton>
      </Rail>
      <Workspace>
        <AccountBar>
          <AccountBox>
            $50K EXPRESS
            <AccountSelect aria-label="Account"><option>| EXPRESS-V...</option></AccountSelect>
            <Caret />
          </AccountBox>
          <InfoButton aria-label="Account info"><CircleAlert size={12} /></InfoButton>
          <Spacer />
          <Rate>Refresh Rate: Fast</Rate>
          <LayoutSelect aria-label="Layout"><option>LAYOUT | default (draft)</option></LayoutSelect>
          <BarIcon aria-label="Save"><Save size={8} strokeWidth={3} /></BarIcon>
          <BarIcon aria-label="Add"><Plus size={9} /></BarIcon>
          <BarIcon aria-label="Reset"><RotateCcw size={8} strokeWidth={3} /></BarIcon>
          <BarIcon $w={20} aria-label="Pop out"><Copy size={9} strokeWidth={3} /></BarIcon>
          <BarIcon $w={15} aria-label="Full screen"><Expand size={9} strokeWidth={3} /></BarIcon>
        </AccountBar>
        <TabsBar>
          <ChartTab>Chart</ChartTab>
          <Spacer />
          <SquareButton $solid aria-label="Add tab"><Plus size={9} strokeWidth={3} /></SquareButton>
          <SquareButton aria-label="Window" />
        </TabsBar>
        <ChartTools>
          <SymbolField><Search size={11} /><SymbolInput aria-label="Symbol" defaultValue="/NQ" /></SymbolField>
          <Tool $w={24} aria-label="Compare"><CirclePlus size={15} strokeWidth={1.5} /></Tool>
          <Sep />
          <Tool $w={24}>5m</Tool>
          <Sep />
          <Tool $w={20} aria-label="Bars"><Draw size={14}><path d="M4 3V14M1 11H4M4 6H6M11 1V13M8 4H11M11 11H15M7 6V12" /></Draw></Tool>
          <Tool $w={20} $color="#d8902c" aria-label="Candles"><Draw size={13} w={1.3}><path d="M4 1V15M1 4H4V12H1M11 2V5M11 11V14M9 5H13V11H9Z" /></Draw></Tool>
          <Tool $w={14} aria-label="More styles"><ChevronDown size={9} /></Tool>
          <Sep />
          <Tool $w={20} aria-label="Indicators"><Draw size={14} w={1.2}><path d="M10 2C7 1 7 4 6 8S5 14 2 13M3 7H9M10 10 14 14M14 10 10 14" /></Draw></Tool>
          <Tool $w={28} aria-label="Templates"><LayoutGrid size={13} strokeWidth={1.7} /></Tool>
          <Sep />
          <Tool $w={63}><Settings size={7} strokeWidth={3} />Preferences</Tool>
          <Sep />
          <Tool $w={83}><Link size={12} strokeWidth={1.8} />Add Chart Link</Tool>
          <Sep />
          <Tool $w={20} aria-label="Undo"><Undo2 size={11} /></Tool>
          <Tool $w={28} $color="#59595d" aria-label="Redo"><Redo2 size={11} /></Tool>
          <Tool $w={20} aria-label="Layout"><Draw size={12}><rect x="1" y="1" width="14" height="14" rx="3" /></Draw></Tool>
        </ChartTools>
        <ChartArea>
          <DrawRail>
            <DrawTool $color="#a07838" aria-label="Cross"><CrossIcon /></DrawTool>
            <DrawTool aria-label="Trend line"><TrendLine /></DrawTool>
            <DrawTool aria-label="Fibonacci"><FibLines /></DrawTool>
            <DrawTool aria-label="Pattern"><Pattern /></DrawTool>
            <DrawTool aria-label="Forecast"><Forecast /></DrawTool>
            <DrawTool aria-label="Brush"><Brush size={15} strokeWidth={1.5} /></DrawTool>
            <DrawTool aria-label="Text"><TextTool /></DrawTool>
            <DrawTool aria-label="Emoji"><Smile size={16} strokeWidth={1.5} /></DrawTool>
            <DrawRule />
            <DrawTool aria-label="Measure"><Ruler size={16} strokeWidth={1.5} transform="rotate(90)" /></DrawTool>
            <DrawTool aria-label="Zoom"><ZoomIn size={15} strokeWidth={1.6} /></DrawTool>
            <DrawRule $color="#9c8486" />
            <DrawTool aria-label="Magnet"><Draw><path d="M3 14V7A5 5 0 0 1 13 7V14H10V7A2 2 0 0 0 6 7V14ZM3 11H6M10 11H13" /></Draw></DrawTool>
            <DrawTool aria-label="Lock drawing"><PenLock /></DrawTool>
            <DrawTool aria-label="Unlock"><LockOpen size={14} strokeWidth={1.6} /></DrawTool>
            <DrawTool aria-label="Hide"><EyeLock /></DrawTool>
            <DrawRule />
            <DrawTool aria-label="Remove"><Trash2 size={15} strokeWidth={1.6} /></DrawTool>
            <Spacer />
            <StarTool aria-label="Favorites"><Star size={14} strokeWidth={1.7} /></StarTool>
            <DrawTool aria-label="Object tree"><Layers size={15} strokeWidth={1.6} /></DrawTool>
          </DrawRail>
          <ChartColumn>
            <ChartBox>
              <PriceChart />
              <Legend>
                <LegendName>NQH26 · 5</LegendName>
                <LiveDot />
                <span>O25687.50</span><span>H25696.00</span><span>L25687.50</span><span>C25693.75</span><span>+6.25 (</span>
              </Legend>
              <FavBar>
                <BarIcon $w={20} aria-label="Line"><TrendLine /></BarIcon>
                <BarIcon $w={18} aria-label="Flag"><Draw size={14}><path d="M4 2V15M5 3 12 5V9H5Z" fill="currentColor" /></Draw></BarIcon>
                <BarIcon $w={8} aria-label="Vertical"><Draw size={14}><path d="M8 4V15" /><circle cx="8" cy="2" r="1.5" /></Draw></BarIcon>
              </FavBar>
              <Tip role="tooltip"><b>Position Bracket</b><br />Enabled</Tip>
              <TvLogo href="#tv" aria-label="TradingView">
                <svg width="16" height="9" viewBox="0 0 16 9" fill="#fff"><path d="M0 0H7V9H3.5V3.5H0ZM12 0H16L12.500 9H9Z" /><circle cx="9.500" cy="1.800" r="1.800" /></svg>
              </TvLogo>
            </ChartBox>
            <TimeAxis>
              <Plot viewBox="83 658 437 18" preserveAspectRatio="xMinYMin slice" fontFamily="Liberation Sans, sans-serif" fontSize="8" fill="#c4c4c4" textAnchor="middle">
                <text x="124" y="670">07:30</text>
                <text x="202" y="670" fontWeight="700">09:00</text>
                <text x="281" y="670">10:30</text>
                <text x="359" y="670" fontWeight="700">12:00</text>
                <text x="437" y="670">13:30</text>
                <g fill="none" stroke="#c4c4c4"><path d="M496 663H501L503 667 501 671H496L494 667Z" /><circle cx="498.500" cy="667" r="1.500" /></g>
              </Plot>
            </TimeAxis>
            <RangeBar>
              {["1yr", "3m", "1m", "5d", "3d", "1d"].map(r => <RangeButton key={r}>{r}</RangeButton>)}
              <Sep />
              <BarIcon $w={26} aria-label="Go to date"><Draw size={14} w={1.2}><path d="M1 7V5Q1 3 3 3H13Q15 3 15 5V13Q15 15 13 15H9M1 6H15M4 1V4M12 1V4M1 11H7L5 9M7 11 5 13" /></Draw></BarIcon>
              <Spacer />
              <RangeButton $w={84}>12:24:01 (UTC+1)</RangeButton>
              <RangeButton $w={28}>ETH</RangeButton>
              <Sep />
              <RangeButton $w={18}>%</RangeButton>
              <RangeButton $w={22}>log</RangeButton>
              <RangeButton $w={26}>auto</RangeButton>
            </RangeBar>
          </ChartColumn>
        </ChartArea>
        <Footer><span>Version: 1.22.30</span><span>Licensed to Topstep & powered by ProjectX. Copyright 2024-2025</span></Footer>
      </Workspace>
    </Trading>
  </Browser>
)

const BookmapWindow = () => {
  const [contrast, setContrast] = useState(100)
  const [cutoff, setCutoff] = useState(42)
  const [depth, setDepth] = useState(100)
  return (
    <Bookmap>
      <TitleBar>
        <Lights $gap={5}>
          {[0, 1, 2].map(i => <Light key={i} $size={9} $color="#c3c0c1" $edge="#a9a6a7" />)}
        </Lights>
        <WindowTitle>{"NQH6.CME@TM.Lite      Bookmap"}</WindowTitle>
      </TitleBar>
      <MenuRow>
        <MenuItem>File</MenuItem>
        <MenuItem>Connections</MenuItem>
        <MenuItem>Settings</MenuItem>
        <MenuItem>Help</MenuItem>
        <Spacer />
        <MenuItem $plain>Upgrade</MenuItem>
        <MenuItem $plain $ml={13}>Feedback</MenuItem>
      </MenuRow>
      <ToolRow>
        <BmTool $w={28} aria-label="Zoom to fit"><Draw size={15}><circle cx="8" cy="8" r="5.500" /><path d="M8 5V11M5 8H11M1 4V1H4M12 1H15V4M15 12V15H12M4 15H1V12" /></Draw></BmTool>
        <BmSep />
        <BmTool aria-label="Share"><Draw size={15}><circle cx="4" cy="8" r="2.800" /><circle cx="12" cy="4" r="2.500" /><circle cx="12" cy="12" r="2.500" /><path d="M6.500 7 10 5M6.500 9 10 11" /></Draw></BmTool>
        <BmTool aria-label="Studies"><Draw size={15}><path d="M1 15V10H4V15M5 15V8H8V15M9 15V9H11V15M12 15V6H15V15M0 15H16M1 7 6 4 10 5 15 1M12 1H15V4" /></Draw></BmTool>
        <BmTool aria-label="Add-ons"><Draw size={15}><path d="M8 1 11 4 8 7 5 4ZM8 9 11 12 8 15 5 12ZM4 5 7 8 4 11 1 8ZM12 5 15 8 12 11 9 8Z" /></Draw></BmTool>
        <BmTool aria-label="Link"><Link size={15} strokeWidth={1.6} /></BmTool>
        <BmSep />
        <SliderStack>
          <Sun size={9} />
          <Range type="range" aria-label="Contrast" value={contrast} onChange={e => setContrast(+e.target.value)} />
          <CircleMinus size={9} />
          <Range type="range" aria-label="Cutoff" value={cutoff} onChange={e => setCutoff(+e.target.value)} />
        </SliderStack>
        <BmSep />
        <BmTool $w={28} aria-label="Draw"><Draw><path d="M2 14 4 9 11 2 14 4 7 12ZM4 9 7 12M9 4 12 7M2 14 8 7" /></Draw></BmTool>
        <BmTool aria-label="Measure"><Draw><path d="M1 2V14M15 2V14M2 8H14M5 5 2 8 5 11M11 5 14 8 11 11" /></Draw></BmTool>
        <BmTool $w={28} aria-label="Notes"><Draw><path d="M2 15 3 11.500A6.500 6 0 1 1 7 14ZM5 6H12M5 8H12M5 10H12" /></Draw></BmTool>
        <BmTool $on aria-label="Crosshair"><CrossIcon size={15} /></BmTool>
        <BmTool aria-label="Timer"><Draw size={15}><circle cx="8" cy="9" r="6" /><path d="M6 1H10M8 1V3M8 9 11 6M13 3 14 4" /></Draw></BmTool>
        <BmTool aria-label="Trade"><Draw><path d="M2 8V4H4V8M5 8V2H7V8M8 8V3H10V8M1 9H11M13 2H15V14H10M1 9Q3 14 6 14T11 9" /><circle cx="6" cy="11" r="1.500" /></Draw></BmTool>
        <BmTool aria-label="Lock"><Lock size={14} strokeWidth={1.6} /></BmTool>
        <BmSep />
        <Palette>
          <PaletteButton aria-label="Color scheme"><Caret /></PaletteButton>
          <Range type="range" aria-label="Depth" value={depth} onChange={e => setDepth(+e.target.value)} />
        </Palette>
        <Spacer />
        <OrderText>Order ...</OrderText>
        <OrderPct>-24%</OrderPct>
        {[100, 55, 0, 0].map((n, i) => <OrderCell key={i} $fill={n} />)}
      </ToolRow>
      <TabRow>
        <BmTab $w={118}>NQH6.CME@BMD <X size={9} /></BmTab>
        <BmTab $w={132} $on>NQH6.CME@TM.Lite <X size={9} /></BmTab>
        <BmTab $w={31} aria-label="Add tab"><Plus size={13} strokeWidth={1.5} /></BmTab>
        <Spacer />
        <BmTab $w={26} aria-label="All tabs"><ChevronDown size={12} /></BmTab>
      </TabRow>
      <ColumnHeads><span /><span>COB</span><span>SVP</span></ColumnHeads>
      <Body>
        <Pane $bg="#1c242a">
          <Heatmap />
          <Replay aria-label="Jump to live">
            <Draw size={18}><path d="M2 2 12 8 2 14ZM15 2V14" /></Draw>
          </Replay>
        </Pane>
        <Pane $bg="#415157"><Ladder /></Pane>
        <Pane $bg="#2d3c43">
          <Plot viewBox="528 580 545 12" preserveAspectRatio="xMinYMin slice" fontFamily="Liberation Mono, monospace" fontSize="11" fill="#c4cdd1" textAnchor="middle">
            <text x="546" y="588">12:00</text>
            <text x="801" y="588">12:15</text>
            <text x="1056" y="588">12:30</text>
            <path d="M545.500 589V592M800.500 589V592M1055.500 589V592" stroke="#c4cdd1" />
            <path d="M673.500 580V592M928.500 580V592" stroke="#3a4a51" />
          </Plot>
        </Pane>
        <Pane $bg="#2d3c43"><PaneToggle aria-label="Collapse"><ChevronDown size={11} strokeWidth={1.5} /></PaneToggle></Pane>
        <Pane $bg="#44545a"><Indicator /></Pane>
        <GaugePane $bg="#3a4a51">
          <Plot viewBox="1073 592 193 102" preserveAspectRatio="xMinYMin slice" textAnchor="middle">
            <path d="M1147 658A34 34 0 1 1 1192 658" fill="none" stroke="#5b6b72" strokeWidth="4" />
            <path d="M1169 600A34 34 0 0 1 1190 606" fill="none" stroke="#42de7c" strokeWidth="4" />
            <text x="1169" y="630" fontSize="8" fill="#4fe08c">CVD</text>
            <text x="1169" y="644" fontSize="10" fontWeight="700" fill="#fff">120</text>
          </Plot>
          <GaugeGear aria-label="Gauge settings"><Settings size={14} strokeWidth={1.6} /></GaugeGear>
        </GaugePane>
      </Body>
      <StatusBar>
        <StatusDot $color="#2a9fe0">i</StatusDot>
        <StatusText $ml={2}>23-Dec-2025 12:02:07.553 CET</StatusText>
        <StatusText $ml={10}>BID ~3 at 25684.50</StatusText>
        <Spacer />
        <StatusText>BMD</StatusText>
        <StatusText $ml={103}>Data: Live</StatusText>
        <StatusText $ml={13}>Trading: Real</StatusText>
        <StatusText $ml={7} />
        <StatusDot $color="#d40000" />
      </StatusBar>
    </Bookmap>
  )
}

const App = () => (
  <Desktop>
    <GlobalStyle />
    <MenuBar>
      <FaApple size={11} />
      <AppName>Bookmap</AppName>
      <Tray>
        <TrayDim><Timer size={11} /></TrayDim>
        <ScreenPill>
          <Draw size={14} w={1.6}><path d="M10 12H2V3H14V8" /><circle cx="13" cy="12" r="2" fill="currentColor" /></Draw>
        </ScreenPill>
        <TrayDim><Box size={11} /></TrayDim>
        <CirclePlay size={11} />
        <Wifi size={13} strokeWidth={3} />
        <BatteryCharging size={15} />
        <TrayDim><Search size={10} /></TrayDim>
        <Draw size={15} w={2}><rect x="1" y="2" width="10" height="5" rx="2.500" fill="currentColor" /><rect x="1" y="9" width="10" height="5" rx="2.500" /><circle cx="14.500" cy="8" r="1" stroke="#30d158" strokeWidth="1" fill="#30d158" /></Draw>
        <Clock>Tue 23 Dec  12:24</Clock>
      </Tray>
    </MenuBar>
    <Windows>
      <BrowserWindow />
      <BookmapWindow />
    </Windows>
    <Pointer width="9" height="13" viewBox="0 0 9 13"><path d="M1 1V10L3 8 5 12 6 11 5 8H8Z" fill="#000" stroke="#ddd" /></Pointer>
  </Desktop>
)

export default App
